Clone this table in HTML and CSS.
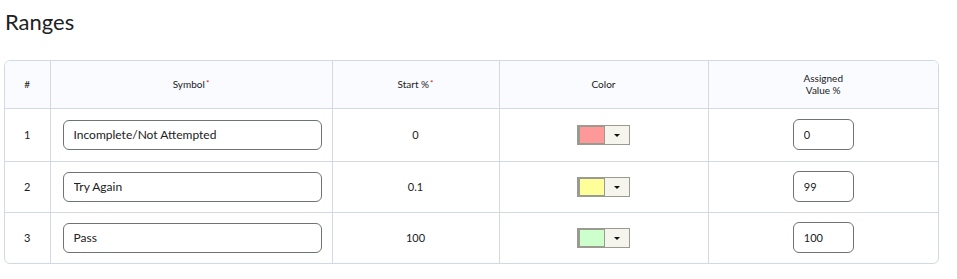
FILE: index.html
```html
<!DOCTYPE html>
<html lang="en">
<head>
<meta charset="utf-8">
<title>Ranges</title>
<link rel="stylesheet" href="styles.css">
</head>
<body>
<main class="page">
  <h2 class="title">Ranges</h2>
  <div class="grid-wrap">
    <table class="ranges">
      <colgroup>
        <col class="c-num"><col class="c-sym"><col class="c-start"><col class="c-color"><col class="c-val">
      </colgroup>
      <thead>
        <tr>
          <th>#</th>
          <th>Symbol<span class="req">*</span></th>
          <th>Start %<span class="req">*</span></th>
          <th>Color</th>
          <th>Assigned<br>Value %</th>
        </tr>
      </thead>
      <tbody>
        <tr>
          <td>1</td>
          <td class="sym"><input class="text-in" type="text" value="Incomplete/Not Attempted"></td>
          <td>0</td>
          <td><span class="picker"><span class="swatch pink"></span><span class="drop"><span class="caret"></span></span></span></td>
          <td><input class="num-in" type="text" value="0"></td>
        </tr>
        <tr>
          <td>2</td>
          <td class="sym"><input class="text-in" type="text" value="Try Again"></td>
          <td>0.1</td>
          <td><span class="picker"><span class="swatch yellow"></span><span class="drop"><span class="caret"></span></span></span></td>
          <td><input class="num-in" type="text" value="99"></td>
        </tr>
        <tr>
          <td>3</td>
          <td class="sym"><input class="text-in" type="text" value="Pass"></td>
          <td>100</td>
          <td><span class="picker"><span class="swatch green"></span><span class="drop"><span class="caret"></span></span></span></td>
          <td><input class="num-in" type="text" value="100"></td>
        </tr>
      </tbody>
    </table>
  </div>
</main>
</body>
</html>
```

FILE: styles.css
```css
* { box-sizing: border-box; }

html, body {
  margin: 0;
  padding: 0;
  background: #ffffff;
}

body {
  font-family: Lato, "Open Sans", sans-serif;
  color: #202122;
}

.page {
  padding: 7px 18px 0 4px;
}

.title {
  margin: 0 0 23px 1px;
  font-size: 22px;
  font-weight: 400;
  line-height: 30px;
  color: #202122;
}

.grid-wrap {
  width: 935px;
  border: 1px solid #d3d9e3;
  border-radius: 6px;
  overflow: hidden;
}

.ranges {
  width: 100%;
  border-collapse: collapse;
  table-layout: fixed;
}

.c-num { width: 45px; }
.c-sym { width: 282px; }
.c-start { width: 167px; }
.c-color { width: 209px; }
.c-val { width: 230px; }

.ranges th,
.ranges td {
  border-right: 1px solid #d3d9e3;
  border-bottom: 1px solid #d3d9e3;
  text-align: center;
  vertical-align: middle;
  padding: 0;
}

.ranges th:last-child,
.ranges td:last-child { border-right: none; }

.ranges tbody tr:last-child td { border-bottom: none; }

.ranges th {
  height: 47px;
  background: #f9fbff;
  font-size: 10px;
  font-weight: 400;
  line-height: 12px;
  color: #202122;
}

.req {
  color: #cd2026;
  font-size: 8px;
  vertical-align: top;
  position: relative;
  top: -1px;
  margin-left: 1px;
}

.ranges td {
  height: 51px;
  font-size: 11px;
  color: #202122;
}

.ranges tbody tr:first-child td { height: 53px; }

.ranges td.sym {
  text-align: left;
  padding: 0 11px 0 12px;
}

.text-in,
.num-in {
  display: block;
  height: 30px;
  border: 1px solid #6e7376;
  border-radius: 6px;
  background: #ffffff;
  font-family: Lato, "Open Sans", sans-serif;
  font-size: 12px;
  color: #202122;
  padding: 0 10px;
  outline: none;
}

.text-in { width: 259px; }

.num-in {
  width: 61px;
  height: 31px;
  margin: 0 auto;
  font-size: 11px;
}

.picker {
  display: inline-flex;
  width: 53px;
  height: 20px;
  border: 1px solid #9a9a90;
  vertical-align: middle;
}

.swatch {
  width: 27px;
  height: 100%;
  border: 1px solid #9a9a90;
  border-left-width: 2px;
}

.swatch.pink { background: #ff9999; }
.swatch.yellow { background: #ffff99; }
.swatch.green { background: #ccffcc; }

.drop {
  flex: 1;
  display: flex;
  align-items: center;
  justify-content: center;
  background: #f5f5ee;
}

.caret {
  width: 0;
  height: 0;
  border-left: 3px solid transparent;
  border-right: 3px solid transparent;
  border-top: 3px solid #111;
  margin-top: 1px;
}
```
